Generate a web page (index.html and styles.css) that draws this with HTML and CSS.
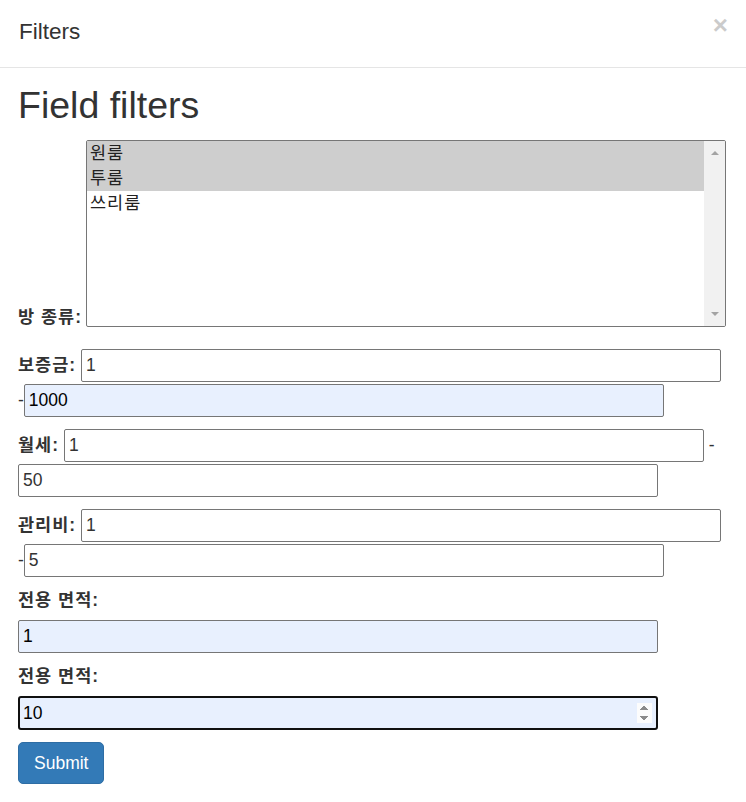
FILE: index.html
```html
<!DOCTYPE html>
<html lang="ko">
<head>
<meta charset="utf-8">
<title>Filters</title>
<link rel="stylesheet" href="styles.css">
</head>
<body>
<div class="modal">
  <div class="modal-header">
    <h4 class="modal-title">Filters</h4>
    <button type="button" class="close" aria-label="Close">×</button>
  </div>
  <div class="modal-body">
    <h1 class="heading">Field filters</h1>
    <form class="filters">
      <div class="field-select">
        <label class="select-label" for="room">방 종류:</label>
        <div class="listbox" id="room" role="listbox" aria-multiselectable="true">
          <div class="listbox-options">
            <div class="option is-selected" role="option" aria-selected="true">원룸</div>
            <div class="option is-selected" role="option" aria-selected="true">투룸</div>
            <div class="option" role="option" aria-selected="false">쓰리룸</div>
          </div>
          <div class="scrollbar" aria-hidden="true"><span class="arrow arrow-up"></span><span class="arrow arrow-down"></span></div>
        </div>
      </div>
      <div class="field"><label class="field-label">보증금:</label> <input class="text-input" type="text" value="1"> -<input class="text-input is-autofill" type="text" value="1000"></div>
      <div class="field"><label class="field-label">월세:</label> <input class="text-input" type="text" value="1"> -<input class="text-input" type="text" value="50"></div>
      <div class="field"><label class="field-label">관리비:</label> <input class="text-input" type="text" value="1"> -<input class="text-input" type="text" value="5"></div>
      <div class="field-stack"><label class="stack-label">전용 면적:</label><input class="text-input stack-input is-autofill" type="text" value="1"></div>
      <div class="field-stack"><label class="stack-label">전용 면적:</label><input class="text-input stack-input is-autofill is-focused" type="number" value="10"></div>
      <button type="submit" class="btn-submit">Submit</button>
    </form>
  </div>
</div>
</body>
</html>
```
FILE: styles.css
```css
* {
  box-sizing: border-box;
}

html,
body {
  margin: 0;
  background: #fff;
}

body {
  font-family: "Liberation Sans", "Noto Sans CJK KR", sans-serif;
  font-size: 17.5px;
  line-height: 25px;
  color: #333;
}

.modal-header {
  display: flex;
  justify-content: space-between;
  align-items: flex-start;
  height: 68px;
  padding: 16px 18px 0 19px;
  border-bottom: 1px solid #e5e5e5;
}

.modal-title {
  margin: 0;
  font-size: 22.5px;
  line-height: 31px;
  font-weight: normal;
  color: #333;
}

.close {
  margin-top: -4px;
  padding: 0;
  border: 0;
  background: none;
  font-family: "Liberation Sans", sans-serif;
  font-size: 26px;
  font-weight: bold;
  line-height: 26px;
  color: #000;
  opacity: 0.2;
  cursor: pointer;
}

.modal-body {
  padding: 0 18px;
}

.heading {
  margin: 17px 0 14px;
  font-size: 37.5px;
  line-height: 41px;
  font-weight: normal;
  color: #333;
}

.field-select {
  display: flex;
  align-items: flex-end;
  gap: 4px;
  margin-bottom: 21px;
}

.select-label {
  font-weight: bold;
  line-height: 20px;
  letter-spacing: 1px;
}

.listbox {
  display: flex;
  width: 640px;
  height: 187px;
  border: 1px solid #767676;
  border-radius: 2px;
  background: #fff;
  overflow: hidden;
}

.listbox-options {
  flex: 1;
}

.option {
  height: 25px;
  padding: 0 3px;
  line-height: 25px;
  letter-spacing: 1px;
  color: #222;
}

.option.is-selected {
  background: #cecece;
}

.scrollbar {
  display: flex;
  flex-direction: column;
  justify-content: space-between;
  align-items: center;
  width: 21px;
  padding: 10px 0 10px;
  background: #f1f1f1;
}

.arrow {
  width: 0;
  height: 0;
  border-left: 4.5px solid transparent;
  border-right: 4.5px solid transparent;
}

.arrow-up {
  border-bottom: 4px solid #a3a3a3;
}

.arrow-down {
  border-top: 4px solid #a3a3a3;
}

.field {
  margin-bottom: 10px;
  line-height: 35px;
}

.field-label {
  display: inline-block;
  vertical-align: top;
  font-weight: bold;
  letter-spacing: 1px;
}

.text-input {
  display: inline-block;
  vertical-align: top;
  width: 640px;
  height: 33px;
  margin: 1px 0;
  padding: 0 4px;
  border: 1px solid #767676;
  border-radius: 2px;
  background: #fff;
  font-family: "Liberation Sans", "Noto Sans CJK KR", sans-serif;
  font-size: 17.5px;
  line-height: normal;
  color: #333;
}

.text-input.is-autofill {
  background: #e8f0fe;
  color: #000;
}

.text-input.is-focused {
  height: 34px;
  border: 2px solid #101010;
  border-radius: 3px;
  padding-left: 3px;
  padding-right: 4px;
  outline: none;
}

.text-input[type="number"]::-webkit-inner-spin-button {
  opacity: 1;
}

.field-stack {
  margin-bottom: 11px;
}

.stack-label {
  display: block;
  margin-bottom: 7px;
  font-weight: bold;
  line-height: 25px;
  letter-spacing: 1px;
}

.stack-input {
  display: block;
  margin: 0;
}

.btn-submit {
  display: inline-block;
  vertical-align: top;
  margin-top: 1px;
  padding: 7.5px 15px;
  border: 1px solid #2e6da4;
  border-radius: 5px;
  background: #337ab7;
  font-family: "Liberation Sans", sans-serif;
  font-size: 17.5px;
  line-height: 25px;
  color: #fff;
  cursor: pointer;
}
```
